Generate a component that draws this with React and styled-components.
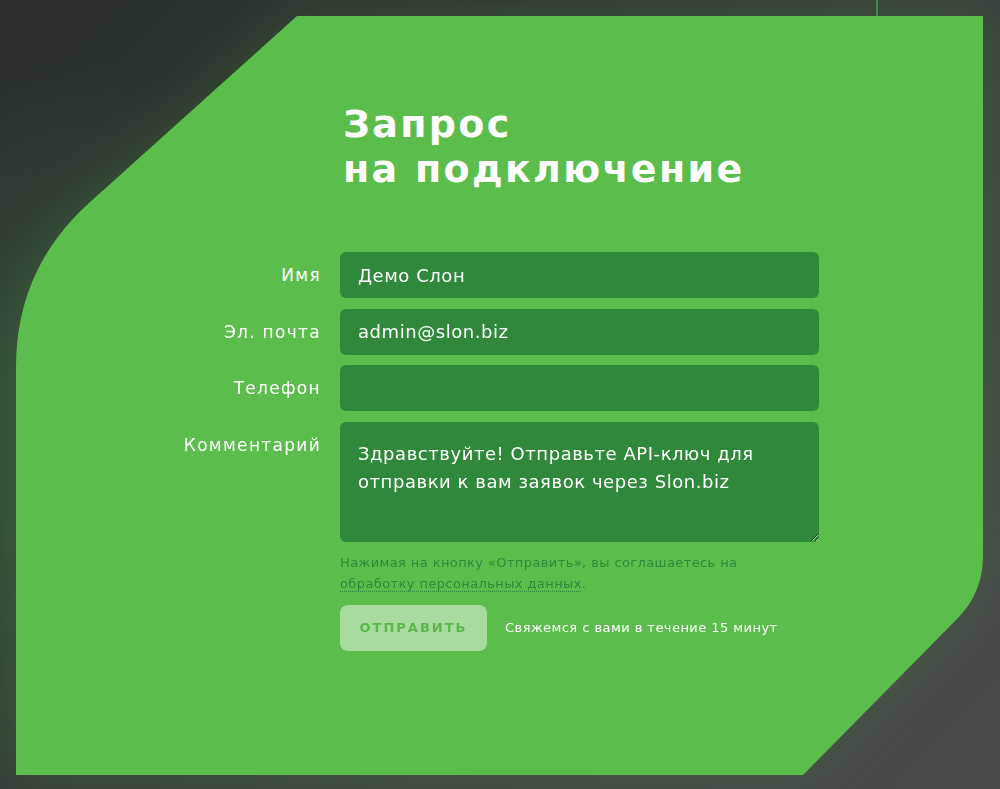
import React from "react";
import styled, { createGlobalStyle } from "styled-components";

const GlobalStyle = createGlobalStyle`
  html, body {
    margin: 0;
    padding: 0;
  }
  body {
    width: 1000px;
    height: 789px;
    overflow: hidden;
    font-family: "DejaVu Sans", "Noto Sans", sans-serif;
    background:
      radial-gradient(ellipse 420px 520px at 60px 420px, rgba(70, 140, 80, 0.28), transparent 70%),
      linear-gradient(135deg, #2a2f2c 0%, #323c35 35%, #3d4640 65%, #4a4a4b 100%);
  }
`;

const Page = styled.main`
  position: relative;
  box-sizing: border-box;
  width: 1000px;
  height: 789px;
  padding: 16px 17px 14px 16px;
`;

const AccentLine = styled.span`
  position: absolute;
  left: 876px;
  top: 0;
  width: 2px;
  height: 16px;
  background: #3a8a4f;
`;

const Glow = styled.div`
  filter: drop-shadow(0 0 28px rgba(80, 170, 70, 0.22));
`;

const Panel = styled.section`
  box-sizing: border-box;
  width: 967px;
  height: 759px;
  background: #5bbd4b;
  clip-path: path("M 281 0 L 967 0 L 967 540 Q 967 577 941 603 L 787 759 L 0 759 L 0 351 Q 0 253 73 187 Z");
  padding: 86px 0 0 0;
`;

const Grid = styled.div`
  display: grid;
  grid-template-columns: 305px 479px;
  column-gap: 19px;
  row-gap: 10.5px;
  align-items: start;
`;

const Title = styled.h1`
  grid-column: 2;
  margin: 0 0 49.5px 3px;
  font-family: "DejaVu Sans", sans-serif;
  font-weight: 700;
  font-size: 38px;
  line-height: 45px;
  letter-spacing: 2.3px;
  color: #ffffff;
`;

const Label = styled.label`
  grid-column: 1;
  display: flex;
  align-items: center;
  justify-content: flex-end;
  height: 46px;
  font-size: 17px;
  letter-spacing: 1.3px;
  color: #ffffff;
  white-space: nowrap;
`;

const fieldBase = `
  box-sizing: border-box;
  width: 479px;
  border: none;
  outline: none;
  border-radius: 6px;
  background: #30893a;
  color: #ffffff;
  font-family: "DejaVu Sans", sans-serif;
  font-size: 18px;
  letter-spacing: 0.55px;
  padding: 0 18px;
  margin: 0;
  display: block;
`;

const Input = styled.input`
  ${fieldBase}
  grid-column: 2;
  height: 46px;
`;

const TextArea = styled.textarea`
  ${fieldBase}
  grid-column: 2;
  height: 120px;
  padding: 18px 18px;
  line-height: 28px;
  resize: vertical;
`;

const Footer = styled.div`
  grid-column: 2;
  display: flex;
  flex-direction: column;
  gap: 10.5px;
`;

const Notice = styled.p`
  margin: 0;
  font-size: 13px;
  letter-spacing: 0.4px;
  line-height: 21px;
  color: #2e8a3b;
  width: 430px;
`;

const NoticeLink = styled.a`
  color: #2e8a3b;
  text-decoration: underline dotted;
  text-underline-offset: 3px;
`;

const Actions = styled.div`
  display: flex;
  align-items: center;
  gap: 18px;
`;

const SubmitButton = styled.button`
  box-sizing: border-box;
  width: 147px;
  height: 46px;
  border: none;
  border-radius: 8px;
  background: #a8dc9f;
  color: #5bb64c;
  font-family: "DejaVu Sans", sans-serif;
  font-weight: 700;
  font-size: 13px;
  letter-spacing: 2px;
  text-transform: uppercase;
  cursor: pointer;
`;

const Hint = styled.span`
  font-size: 13px;
  letter-spacing: 0.45px;
  color: #ffffff;
`;

export default function App() {
  return (
    <>
      <GlobalStyle />
      <Page>
        <AccentLine />
        <Glow>
          <Panel>
            <Grid>
              <Title>
                Запрос
                <br />
                на подключение
              </Title>
              <Label htmlFor="name">Имя</Label>
              <Input id="name" defaultValue="Демо Слон" />
              <Label htmlFor="email">Эл. почта</Label>
              <Input id="email" defaultValue="admin@slon.biz" />
              <Label htmlFor="phone">Телефон</Label>
              <Input id="phone" defaultValue="" />
              <Label htmlFor="comment">Комментарий</Label>
              <TextArea
                id="comment"
                defaultValue="Здравствуйте! Отправьте API-ключ для отправки к вам заявок через Slon.biz"
              />
              <Footer>
                <Notice>
                  Нажимая на кнопку «Отправить», вы соглашаетесь на{" "}
                  <NoticeLink href="#">обработку персональных данных</NoticeLink>.
                </Notice>
                <Actions>
                  <SubmitButton type="button">Отправить</SubmitButton>
                  <Hint>Свяжемся с вами в течение 15 минут</Hint>
                </Actions>
              </Footer>
            </Grid>
          </Panel>
        </Glow>
      </Page>
    </>
  );
}
